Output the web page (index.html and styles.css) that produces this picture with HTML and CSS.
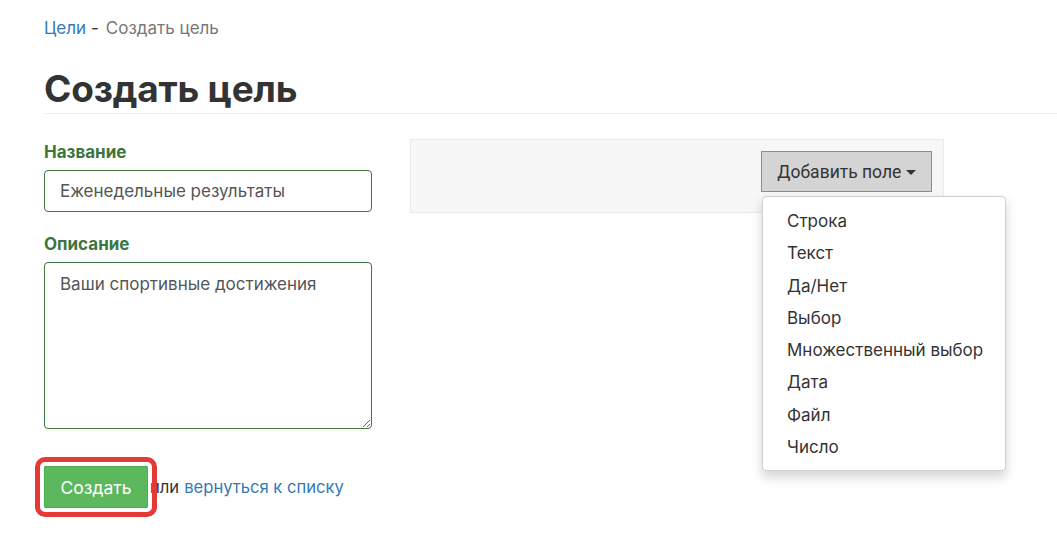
FILE: index.html
```html
<!DOCTYPE html>
<html lang="ru">
<head>
<meta charset="utf-8">
<title>Создать цель</title>
<link rel="stylesheet" href="styles.css">
</head>
<body>
<div class="page">
  <div class="breadcrumb"><a href="#" class="crumb-link">Цели</a><span class="sep">-</span><span class="crumb-current">Создать цель</span></div>
  <h1 class="title">Создать цель</h1>
  <div class="rule"></div>
  <div class="form-row">
    <div class="left-col">
      <label class="field-label">Название</label>
      <input class="field-input" type="text" value="Еженедельные результаты">
      <label class="field-label second">Описание</label>
      <textarea class="field-area">Ваши спортивные достижения</textarea>
      <div class="actions"><button class="btn-create">Создать</button><span class="or">или</span><a href="#" class="back-link">вернуться к списку</a></div>
    </div>
    <div class="right-col">
      <div class="panel">
        <div class="dropdown">
          <button class="btn-add">Добавить поле <span class="caret"></span></button>
          <ul class="menu">
            <li>Строка</li>
            <li>Текст</li>
            <li>Да/Нет</li>
            <li>Выбор</li>
            <li>Множественный выбор</li>
            <li>Дата</li>
            <li>Файл</li>
            <li>Число</li>
          </ul>
        </div>
      </div>
    </div>
  </div>
</div>
</body>
</html>
```
FILE: styles.css
```css
* { box-sizing: border-box; }
html, body { margin: 0; padding: 0; background: #fff; }
body {
  font-family: "Inter", "Liberation Sans", sans-serif;
  font-size: 17px;
  color: #333;
}
.page { padding: 18px 0 40px 44px; }
.breadcrumb { font-size: 17px; line-height: 20px; height: 20px; }
.crumb-link { color: #337ab7; text-decoration: none; }
.sep { color: #333; margin: 0 7px 0 5px; }
.crumb-current { color: #777; }
.title {
  margin: 28px 0 0 0;
  font-size: 37px;
  line-height: 46px;
  font-weight: 700;
  color: #333;
  letter-spacing: -0.2px;
}
.rule { height: 1px; background: #eee; margin-top: 1px; }
.form-row { display: flex; align-items: flex-start; gap: 38px; margin-top: 25px; }
.left-col { width: 328px; padding-top: 2px; display: flex; flex-direction: column; }
.field-label { display: block; font-weight: 700; color: #3c763d; line-height: 22px; margin-bottom: 7px; font-size: 17px; }
.field-label.second { margin-top: 21px; }
.field-input, .field-area {
  width: 328px;
  border: 1px solid #3c763d;
  border-radius: 4px;
  font-family: "Inter", "Liberation Sans", sans-serif;
  font-size: 17px;
  color: #555;
  background: #fff;
  outline: none;
}
.field-input { height: 42px; padding: 0 15px; }
.field-area { height: 167px; padding: 10px 15px; resize: vertical; line-height: 22px; }
.actions { margin-top: 37px; line-height: 42px; color: #333; font-size: 16.6px; display: flex; align-items: center; }
.or { margin-left: 2px; }
.back-link { color: #337ab7; text-decoration: none; margin-left: 5px; }
.btn-create {
  height: 42px;
  width: 104px;
  flex: none;
  background: #5cb85c;
  border: 1px solid #4cae4c;
  color: #fff;
  font-family: "Inter", "Liberation Sans", sans-serif;
  font-size: 17.5px;
  outline: 5px solid #e53935;
  outline-offset: 4px;
  border-radius: 1px;
  padding: 0;
  margin: 0;
  position: relative;
  z-index: 2;
}
.right-col { width: 534px; }
.panel {
  height: 74px;
  background: #f7f7f7;
  border: 1px solid #ebebeb;
  padding: 11px 11px 0 0;
  display: flex;
  justify-content: flex-end;
}
.dropdown { position: relative; }
.btn-add {
  height: 41px;
  width: 171px;
  background: #d4d4d4;
  border: 1px solid #8c8c8c;
  font-family: "Roboto", "Liberation Sans", sans-serif;
  font-size: 17.5px;
  color: #333;
  padding: 0;
}
.caret {
  display: inline-block;
  width: 0; height: 0;
  border-left: 5px solid transparent;
  border-right: 5px solid transparent;
  border-top: 5px solid #333;
  vertical-align: middle;
  margin-left: 0;
}
.menu {
  position: absolute;
  top: 45px;
  left: 1px;
  width: 244px;
  margin: 0;
  padding: 8px 0 7px;
  list-style: none;
  background: #fff;
  border: 1px solid #d0d0d0;
  border-radius: 4px;
  box-shadow: 0 6px 12px rgba(0,0,0,0.175);
  z-index: 5;
}
.menu li { height: 32.3px; line-height: 32.3px; padding-left: 24px; color: #333; font-size: 17px; white-space: nowrap; }
```
